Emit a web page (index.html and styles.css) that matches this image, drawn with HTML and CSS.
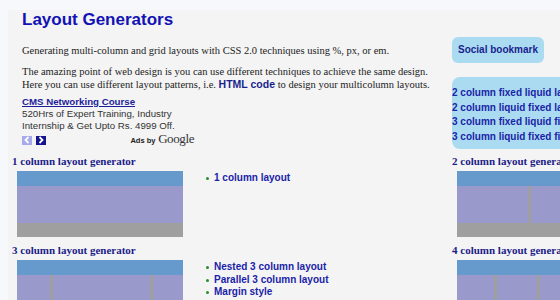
FILE: index.html
```html
<!DOCTYPE html>
<html>
<head>
<meta charset="utf-8">
<link rel="stylesheet" href="styles.css">
</head>
<body>
<div class="page">
  <div class="grid">
    <div class="intro">
      <h1 class="title">Layout Generators</h1>
      <p class="lead">Generating multi-column and grid layouts with CSS 2.0 techniques using %, px, or em.</p>
      <p class="lead lead2">The amazing point of web design is you can use different techniques to achieve the same design.<br>Here you can use different layout patterns, i.e. <a class="code" href="#">HTML code</a> to design your multicolumn layouts.</p>
      <div class="ad">
        <a class="ad-title" href="#">CMS Networking Course</a>
        <div class="ad-text">520Hrs of Expert Training, Industry<br>Internship &amp; Get Upto Rs. 4999 Off.</div>
        <div class="ad-foot">
          <div class="ad-nav">
            <span class="nav-btn prev"><svg width="6" height="8" viewBox="0 0 6 8"><path d="M4.5 1 L1.5 4 L4.5 7" fill="none" stroke="#fff" stroke-width="1.8"/></svg></span>
            <span class="nav-btn next"><svg width="6" height="8" viewBox="0 0 6 8"><path d="M1.5 1 L4.5 4 L1.5 7" fill="none" stroke="#fff" stroke-width="1.8"/></svg></span>
          </div>
          <div class="adsby"><span class="ab-small">Ads by</span> <span class="ab-google">Google</span></div>
        </div>
      </div>
    </div>
    <aside class="side">
      <div class="bookmark">Social bookmark</div>
      <div class="links">
        <a href="#">2 column fixed liquid layout</a>
        <a href="#">2 column liquid fixed layout</a>
        <a href="#">3 column fixed liquid fixed layout</a>
        <a href="#">3 column liquid fixed fixed layout</a>
      </div>
    </aside>

    <div class="gen">
      <h2 class="gen-title">1 column layout generator</h2>
      <div class="gen-row">
        <div class="lbox"><div class="lhead"></div><div class="lmid"><span class="col" style="flex:1"></span></div></div>
        <ul class="glist"><li>1 column layout</li></ul>
      </div>
    </div>
    <div class="gen gen-right">
      <h2 class="gen-title">2 column layout generator</h2>
      <div class="gen-row">
        <div class="lbox"><div class="lhead"></div><div class="lmid"><span class="col" style="width:71px"></span><span class="col" style="flex:1"></span></div></div>
      </div>
    </div>

    <div class="gen">
      <h2 class="gen-title">3 column layout generator</h2>
      <div class="gen-row">
        <div class="lbox"><div class="lhead"></div><div class="lmid"><span class="col" style="width:33px"></span><span class="col" style="flex:1"></span><span class="col" style="width:30px"></span></div></div>
        <ul class="glist"><li>Nested 3 column layout</li><li>Parallel 3 column layout</li><li>Margin style</li></ul>
      </div>
    </div>
    <div class="gen gen-right">
      <h2 class="gen-title">4 column layout generator</h2>
      <div class="gen-row">
        <div class="lbox"><div class="lhead"></div><div class="lmid"><span class="col" style="width:37px"></span><span class="col" style="width:40px"></span><span class="col" style="width:40px"></span><span class="col" style="flex:1"></span></div></div>
      </div>
    </div>
  </div>
</div>
</body>
</html>
```

FILE: styles.css
```css
html, body {
  margin: 0;
  padding: 0;
}
body {
  background: #f6f8fc;
  overflow: hidden;
  font-family: "Liberation Serif", "Times New Roman", serif;
}
.page {
  margin: 10px 0 0 8px;
  padding-left: 4px;
  width: 760px;
  min-height: 300px;
  background: #f4f4f4;
}
.grid {
  display: grid;
  grid-template-columns: 440px 300px;
}
.intro {
  padding-left: 10px;
}
.title {
  margin: 0;
  font-family: "Liberation Sans", Arial, sans-serif;
  font-size: 17px;
  line-height: 20px;
  font-weight: bold;
  color: #1212b4;
}
.lead {
  margin: 14px 0 0;
  font-size: 10.5px;
  line-height: 13px;
  color: #222;
}
.lead2 {
  margin-top: 8px;
}
.code {
  font-family: "Liberation Sans", Arial, sans-serif;
  font-weight: bold;
  color: #1a1f8e;
  text-decoration: none;
}
.ad {
  margin-top: 5px;
  width: 172px;
  font-family: "Liberation Sans", Arial, sans-serif;
  font-size: 9.7px;
  line-height: 12px;
  color: #333;
}
.ad-title {
  font-weight: bold;
  color: #1d1d9a;
  text-decoration: underline;
}
.ad-foot {
  display: flex;
  justify-content: space-between;
  align-items: center;
  margin-top: 1px;
}
.ad-nav {
  display: flex;
  gap: 4px;
}
.nav-btn {
  width: 10px;
  height: 9px;
  display: flex;
  align-items: center;
  justify-content: center;
}
.prev { background: #a8a8ec; }
.next { background: #14148c; }
.adsby {
  color: #222;
  white-space: nowrap;
}
.ab-small {
  font-size: 7.5px;
  font-weight: bold;
  font-family: "Liberation Sans", Arial, sans-serif;
}
.ab-google {
  font-family: "Liberation Serif", serif;
  font-size: 13px;
  color: #333;
  letter-spacing: -0.4px;
}
.side {
  padding-top: 27px;
  font-family: "Liberation Sans", Arial, sans-serif;
  font-size: 10px;
  font-weight: bold;
}
.bookmark {
  display: inline-block;
  padding: 0 6px;
  line-height: 26px;
  border-radius: 6px;
  background: #aadbf0;
  color: #1a1f8e;
}
.links {
  margin-top: 14px;
  padding: 9px 0 5px;
  border-radius: 8px 0 0 8px;
  background: #aadbf0;
  line-height: 14.5px;
  white-space: nowrap;
}
.links a {
  display: block;
  color: #1a23a8;
  text-decoration: none;
}
.gen {
  padding-top: 5px;
}
.gen-title {
  margin: 0 0 3px;
  font-size: 11px;
  line-height: 14px;
  font-weight: bold;
  color: #1c1c88;
}
.gen-row {
  display: flex;
  align-items: flex-start;
}
.lbox {
  margin-left: 5px;
  margin-bottom: 1px;
  width: 166px;
  height: 66px;
  background: #9f9f9f;
}
.lhead {
  height: 15px;
  background: #6699cc;
}
.lmid {
  height: 37px;
  display: flex;
  gap: 3px;
}
.col {
  display: block;
  background: #9999cc;
}
.glist {
  margin: 1px 0 0 23px;
  padding: 0 0 0 8px;
  list-style: none;
  font-family: "Liberation Sans", Arial, sans-serif;
  font-size: 10px;
  font-weight: bold;
  line-height: 12.5px;
  color: #1a23a8;
}
.glist li {
  position: relative;
}
.glist li::before {
  content: "";
  position: absolute;
  left: -8px;
  top: 5px;
  width: 3px;
  height: 3px;
  border-radius: 50%;
  background: #2b8a2b;
}
```
